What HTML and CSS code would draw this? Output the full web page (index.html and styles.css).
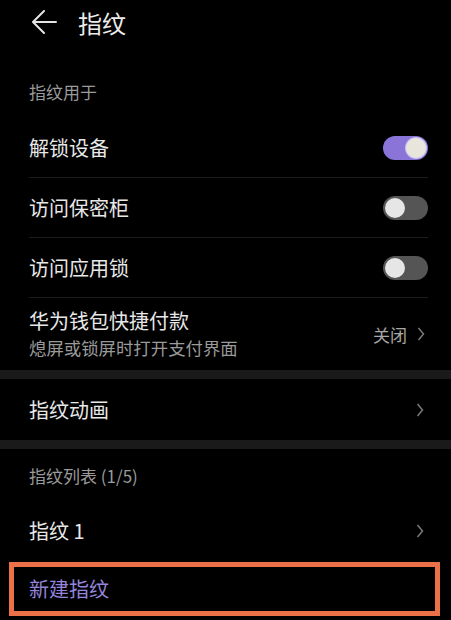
FILE: index.html
```html
<!DOCTYPE html>
<html lang="zh-CN">
<head>
  <meta charset="UTF-8">
  <meta name="viewport" content="width=device-width, initial-scale=1.0">
  <title>指纹</title>
  <link rel="stylesheet" href="styles.css">
</head>
<body>
  <header class="header">
    <svg class="back" width="26" height="26" viewBox="0 0 26 26">
      <path d="M25 12H3M13 1L2 12L13 23" fill="none" stroke="#e4e4e4" stroke-width="2" stroke-linecap="round" stroke-linejoin="round"/>
    </svg>
    <h1 class="title">指纹</h1>
  </header>

  <div class="caption caption-first">指纹用于</div>
  <div class="list">
    <div class="row">
      <span class="label">解锁设备</span>
      <span class="switch on"></span>
    </div>
    <div class="row">
      <span class="label">访问保密柜</span>
      <span class="switch"></span>
    </div>
    <div class="row">
      <span class="label">访问应用锁</span>
      <span class="switch"></span>
    </div>
    <div class="row row-tall">
      <div class="text">
        <span class="label">华为钱包快捷付款</span>
        <span class="sub">熄屏或锁屏时打开支付界面</span>
      </div>
      <span class="value">关闭
        <svg class="chevron" width="8" height="14" viewBox="0 0 8 14"><path d="M1.5 1L6.5 7L1.5 13" fill="none" stroke="#7a7a7a" stroke-width="1.5"/></svg>
      </span>
    </div>
  </div>

  <div class="band"></div>
  <div class="list">
    <div class="row row-last">
      <span class="label">指纹动画</span>
      <svg class="chevron" width="8" height="14" viewBox="0 0 8 14"><path d="M1.5 1L6.5 7L1.5 13" fill="none" stroke="#7a7a7a" stroke-width="1.5"/></svg>
    </div>
  </div>
  <div class="band"></div>

  <div class="caption caption-second">指纹列表 (1/5)</div>
  <div class="list">
    <div class="row row-last">
      <span class="label">指纹 1</span>
      <svg class="chevron" width="8" height="14" viewBox="0 0 8 14"><path d="M1.5 1L6.5 7L1.5 13" fill="none" stroke="#7a7a7a" stroke-width="1.5"/></svg>
    </div>
  </div>

  <div class="new-box">
    <span class="new-label">新建指纹</span>
  </div>
</body>
</html>
```

FILE: styles.css
```css
body {
  margin: 0;
  padding: 0;
  background: #000;
  color: #e8e8e8;
  font-family: "Noto Sans CJK SC", "Noto Sans", sans-serif;
  width: 451px;
  height: 620px;
  overflow: hidden;
}

.header {
  height: 46px;
  display: flex;
  align-items: center;
  padding-left: 31px;
}

.back {
  display: block;
}

.title {
  margin: 0 0 0 21px;
  font-size: 24px;
  font-weight: normal;
  line-height: 30px;
  color: #ececec;
}

.caption {
  padding-left: 29px;
  font-size: 17px;
  line-height: 24px;
  color: #9a9a9a;
  box-sizing: border-box;
}

.caption-first {
  height: 72px;
  padding-top: 34px;
}

.caption-second {
  height: 51px;
  padding-top: 15px;
}

.list {
  padding: 0 23px 0 29px;
}

.row {
  height: 59px;
  display: flex;
  align-items: center;
  justify-content: space-between;
  border-bottom: 1px solid #1c1c1c;
}

.row-tall {
  height: 72px;
  border-bottom: none;
}

.row-last {
  height: 61px;
  border-bottom: none;
}

.label {
  font-size: 20px;
  line-height: 26px;
  color: #e8e8e8;
}

.text {
  display: flex;
  flex-direction: column;
  gap: 2px;
}

.sub {
  font-size: 17.4px;
  line-height: 24px;
  color: #9a9a9a;
}

.value {
  display: flex;
  align-items: center;
  gap: 10px;
  font-size: 17px;
  color: #a8a8a8;
  padding-right: 3px;
}

.chevron {
  display: block;
  margin-right: 4px;
}

.value .chevron {
  margin-right: 0;
}

.switch {
  width: 45px;
  height: 24px;
  border-radius: 12px;
  background: #555;
  position: relative;
}

.switch::after {
  content: "";
  position: absolute;
  top: 2px;
  left: 2px;
  width: 20px;
  height: 20px;
  border-radius: 50%;
  background: #e6e6e6;
}

.switch.on {
  background: #8a74d8;
}

.switch.on::after {
  left: 23px;
  background: #e8e6dc;
  box-shadow: 0 0 0 1px #c9c0ee;
}

.band {
  height: 9px;
  background: #1a1a1a;
}

.new-box {
  margin: 1px 11px 0 9px;
  height: 44px;
  border: 5px solid #ec7148;
  display: flex;
  align-items: center;
  padding-left: 15px;
}

.new-label {
  font-size: 20px;
  line-height: 26px;
  color: #9484dc;
}
```
